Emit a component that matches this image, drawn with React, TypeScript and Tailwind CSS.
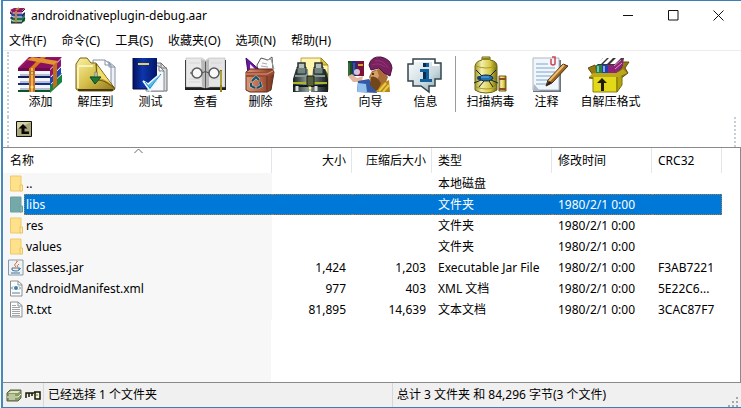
import React from "react";

function AddIcon() {
  return (
    <svg width="45" height="38" viewBox="0 0 45 38">
      <path d="M32 28 44 17V26L32 37Z" fill="#17843f" />
      <path d="M32 21 43 10V18L32 30Z" fill="#1f45b5" />
      <path d="M32 14 43 3V10L32 21Z" fill="#8c1668" />
      <path d="M0 12 11 1H44L32 13Z" fill="#9b1466" />
      <path d="M3 12 13 2H43L32 13Z" fill="#7d0e59" opacity=".6" />
      <path d="M0 12H32V15H0Z" fill="#6d0a4e" />
      <path d="M2 15H32V20H2ZM2 22H32V27H2ZM2 29H32V34H2Z" fill="#f4f5fa" />
      <path d="M2 18H32V20H2ZM2 25H32V27H2ZM2 32H32V34H2Z" fill="#b9bfd2" />
      <path d="M0 20H32V22H0Z" fill="#10205c" />
      <path d="M0 27H32V29H0Z" fill="#14308a" />
      <path d="M0 34H32V36H0Z" fill="#0b552c" />
      <path d="M33 21 43 11M33 28 44 18" stroke="#dbe3f5" strokeWidth="1" />
      <path d="M12 12 23 1H28L17 12Z" fill="#d97a1c" />
      <path d="M9 4 36 9 40 5 14 1Z" fill="#e39532" />
      <path d="M11 12H17V36H11Z" fill="#c9731f" />
      <path d="M13 12H15V36H13Z" fill="#f0b257" />
      <path d="M35 10 39 6V29L35 33Z" fill="#c36c1b" />
      <circle cx="14" cy="17" r="1.5" fill="#ffe27a" stroke="#6b3c08" strokeWidth=".5" />
      <circle cx="14" cy="31" r="1.5" fill="#ffe27a" />
    </svg>
  );
}

function ExtractIcon() {
  return (
    <svg width="45" height="38" viewBox="0 0 45 38">
      <defs>
        <linearGradient id="folder" x1="0" y1="0" x2="1" y2="1">
          <stop stopColor="#fbf3a5" /><stop offset=".5" stopColor="#d6bf4a" /><stop offset="1" stopColor="#8e741b" />
        </linearGradient>
      </defs>
      <path d="M24 6H36L42 11V32H24Z" fill="#eef1f6" stroke="#8692a5" />
      <path d="M20 4H32L38 9V32H20Z" fill="#fff" stroke="#8692a5" />
      <path d="M32 4V9H38M36 6V11H42" fill="none" stroke="#8692a5" />
      <path d="M3 8 7 2H14L18 7H23L42 33 39 35H6L3 33Z" fill="url(#folder)" stroke="#786015" />
      <path d="M5 10H20M5 11V32" stroke="#fffad0" strokeWidth="1.5" />
      <path d="M23 8 42 33C36 27 30 24 24 24Z" fill="#c39c2a" stroke="#67510d" />
      <path d="M24 9 39 29C32 23 29 22 25 23Z" fill="#f1dc6c" />
      <path d="M5 34H40" stroke="#49380b" strokeWidth="2" />
      <path d="M22 16V21H17L22 27 27 21H24V16Z" fill="#e5efe1" stroke="#738475" />
      <path d="M17 21H28L22 28Z" fill="#1e7837" stroke="#0e4c20" />
    </svg>
  );
}

function TestIcon() {
  return (
    <svg width="45" height="38" viewBox="0 0 45 38">
      <defs><linearGradient id="cover"><stop stopColor="#05105f" /><stop offset=".4" stopColor="#0d36ad" /><stop offset="1" stopColor="#041667" /></linearGradient></defs>
      <path d="M25 7H33L39 13V35H20Z" fill="#d9dde1" stroke="#6a6e72" />
      <path d="M23 10H31L36 15V35H18Z" fill="#f8f9fa" stroke="#858a90" />
      <path d="M31 10V15H36M33 7V12H39" fill="none" stroke="#777" />
      <path d="M5 2H29V25L23 33H5Z" fill="url(#cover)" />
      <path d="M5 2V33H20" fill="none" stroke="#030b42" />
      <path d="M10 8H21" stroke="#e5d254" strokeWidth="2" />
      <path d="M15 25 20 28 34 16 22 35Z" fill="#5dbbe9" stroke="#eafaff" strokeWidth="1.5" />
      <path d="M17 26 22 32 33 18" fill="none" stroke="#248bc8" />
    </svg>
  );
}

function ViewIcon() {
  return (
    <svg width="45" height="38" viewBox="0 0 45 38">
      <path d="M2 4H21L23 6 25 4H43V34H2Z" fill="#1e1e1e" />
      <path d="M3 2H19L22 4V32L18 31H3Z" fill="#e9e9e9" stroke="#aaa" strokeWidth=".5" />
      <path d="M42 2H26L23 4V32L27 31H42Z" fill="#e4e4e4" stroke="#aaa" strokeWidth=".5" />
      <path d="M18 3 22 5V32L19 30ZM26 3 23 5V32L26 30Z" fill="#b9b9b9" />
      <path d="M6 7H17M6 23H17M6 26H17M28 7H39M28 23H38" stroke="#d5d5d5" />
      <circle cx="14" cy="17" r="5" fill="#f8f8f8" stroke="#595959" strokeWidth="1.5" />
      <circle cx="31" cy="17" r="5" fill="#f8f8f8" stroke="#595959" strokeWidth="1.5" />
      <path d="M9 17H7M19 17Q22 14 26 17M36 16 39 15" fill="none" stroke="#4d4d4d" />
      <path d="M38 14V30" stroke="#766c13" strokeWidth="2" />
      <path d="M38 15V29" stroke="#e4d75e" />
      <path d="M37 29H39V36H37Z" fill="#97861b" />
    </svg>
  );
}

function DeleteIcon() {
  return (
    <svg width="45" height="38" viewBox="0 0 45 38">
      <defs><linearGradient id="bin"><stop stopColor="#dc9879" /><stop offset=".5" stopColor="#b86447" /><stop offset="1" stopColor="#72351f" /></linearGradient></defs>
      <path d="M19 9 23 2 30 4 34 1 35 14 20 17Z" fill="#fafafa" stroke="#555" />
      <path d="M28 4 33 3 36 13" fill="none" stroke="#999" />
      <path d="M24 7 29 8M23 10 30 11" stroke="#aaa" />
      <path d="M8 2 25 17H10Z" fill="#7015a0" stroke="#370b5f" />
      <path d="M12 8 18 14H12Z" fill="#f4e5fa" />
      <path d="M8 16 12 13H34L36 16 33 34 29 36H12L8 34Z" fill="url(#bin)" stroke="#5c2b1b" />
      <path d="M8 16H29L35 13 36 18 30 21H8Z" fill="#9c4c32" />
      <path d="M8 18H29L35 15" fill="none" stroke="#df9b7e" />
      <path d="M14 25 18 21 21 24M22 26 23 30 19 32M17 32 13 30 13 27" fill="none" stroke="#b6dbe0" strokeWidth="3" />
      <path d="M14 25 18 21 21 24M22 26 23 30 19 32M17 32 13 30 13 27" fill="none" stroke="#175066" strokeWidth="2" />
      <path d="M29 20V35" stroke="#6a2d1a" />
    </svg>
  );
}

function FindIcon() {
  return (
    <svg width="45" height="38" viewBox="0 0 45 38">
      <defs><linearGradient id="barrel"><stop stopColor="#182022" /><stop offset=".4" stopColor="#8b9b98" /><stop offset="1" stopColor="#11191b" /></linearGradient></defs>
      <path d="M8 2H28L35 9V34H8Z" fill="#fff5ac" stroke="#b8a44a" />
      <path d="M28 2V9H35Z" fill="#e2c33c" stroke="#a1831f" />
      <path d="M4 12H7L4 18ZM32 13 35 18V26H32Z" fill="#626b32" />
      <path d="M3 13H15L16 36H0V23ZM20 13H32L35 23V36H18Z" fill="url(#barrel)" />
      <path d="M4 11H13V18H4ZM21 11H30V18H21Z" fill="#738480" stroke="#1f2929" />
      <path d="M5 12V7H12V12M22 12V7H29V12" fill="#b5c0ba" stroke="#273130" strokeWidth="1.5" />
      <path d="M2 20H14M20 20H32" stroke="#899a93" strokeWidth="2" />
      <path d="M0 27H15M18 27H34" stroke="#b0b623" strokeWidth="2" />
      <path d="M0 30H15M18 30H34" stroke="#0f1719" strokeWidth="2" />
      <path d="M14 20H21V30H14Z" fill="#57603d" stroke="#191e19" />
      <path d="M4 30V35M23 30V35" stroke="#dbe1e1" strokeWidth="3" />
    </svg>
  );
}

function WizardIcon() {
  return (
    <svg width="45" height="38" viewBox="0 0 45 38">
      <path d="M0 5H5V20H0Z" fill="#174f23" /><path d="M4 5H9V20H4Z" fill="#202b91" /><path d="M9 5H16V20H9Z" fill="#7b1038" />
      <path d="M1 7V19M6 7V19" stroke="#5d8a51" />
      <path d="M10 9H15" stroke="#d1a43b" strokeWidth="2" />
      <path d="M0 20 4 18 9 22 15 20 14 26 5 26Z" fill="#e3b59c" />
      <circle cx="9" cy="16" r="3" fill="#fff" opacity=".75" />
      <path d="M9 36 10 25 21 23 28 32 29 37Z" fill="#3559a5" />
      <path d="M10 27 18 28 19 36H9Z" fill="#91c1ec" />
      <path d="M24 15 34 12 40 21 36 31 29 33 23 26 21 21Z" fill="#a96c38" />
      <path d="M24 17 29 14 31 20 28 25 22 23Z" fill="#d5a067" />
      <path d="M23 21Q27 19 31 24L35 31 28 35 22 29Z" fill="#70471d" />
      <path d="M29 35 33 28 41 24 42 36H27Z" fill="#b88718" />
      <path d="M31 35 38 27M35 36 41 29" stroke="#e8cc48" strokeWidth="2" />
      <path d="M21 9Q23 0 33 1Q43 3 44 12L42 20 36 17 31 12 23 14Z" fill="#79205f" stroke="#4b113e" />
      <path d="M24 9Q31 6 37 11M27 5Q35 3 40 12" fill="none" stroke="#92367b" />
      <circle cx="25" cy="18" r="1" fill="#291708" />
    </svg>
  );
}

function InfoIcon() {
  return (
    <svg width="45" height="38" viewBox="0 0 45 38">
      <defs><linearGradient id="bubble" x1="0" y1="0" x2="1" y2="1"><stop stopColor="#fff" /><stop offset=".6" stopColor="#c9d9df" /><stop offset="1" stopColor="#809ca6" /></linearGradient></defs>
      <path d="M10 3H32V7H38V23H32V30H26V36L18 30H10V25H5V8H10Z" fill="url(#bubble)" stroke="#35464d" strokeWidth="1.5" />
      <path d="M11 5H30V9H36" fill="none" stroke="#fff" strokeWidth="2" />
      <path d="M20 7H26V11H20ZM17 13H26V23H29V26H17V23H20V16H17Z" fill="#155f9c" />
      <path d="M20 7H23V11H20ZM20 16H23V23H20Z" fill="#082d55" />
    </svg>
  );
}

function ScanIcon() {
  return (
    <svg width="45" height="38" viewBox="0 0 45 38">
      <defs><linearGradient id="jar"><stop stopColor="#a39a20" /><stop offset=".3" stopColor="#f4eeae" /><stop offset=".7" stopColor="#d6c842" /><stop offset="1" stopColor="#6e6812" /></linearGradient></defs>
      <path d="M14 1H22V4Q29 5 29 10V34Q25 37 18 37T7 34V10Q8 5 14 4Z" fill="url(#jar)" stroke="#6c6616" />
      <path d="M14 2H22V4H14Z" fill="#8b831b" />
      <path d="M8 10Q18 14 28 10M8 31Q18 35 28 31" fill="none" stroke="#a89b25" />
      <path d="M14 20 8 14M13 24 6 27M22 20 28 14M23 24 30 27M16 25 11 31M21 25 25 31" stroke="#14232d" />
      <ellipse cx="18" cy="22" rx="7" ry="3" fill="#216caa" stroke="#082644" />
      <path d="M13 21H21" stroke="#62b4df" />
      <circle cx="11" cy="22" r="2" fill="#113b70" />
      <path d="M31 20H38V35H31Z" fill="url(#jar)" stroke="#765a13" />
      <path d="M31 23H38M31 33H38" stroke="#8d4d20" strokeWidth="2" />
    </svg>
  );
}

function CommentIcon() {
  return (
    <svg width="45" height="38" viewBox="0 0 45 38">
      <path d="M11 4H37V36H9Z" fill="#697580" />
      <path d="M9 2H35V34H9Z" fill="#f0f6fb" stroke="#b0b8c0" />
      <path d="M12 8H24M12 12H31M12 16H31M12 20H30M12 24H25M12 28H23" stroke="#7ca5cc" />
      <path d="M10 28 16 35H9Z" fill="#adb9c4" />
      <path d="M27 3V8Q29 10 31 8V1H28" fill="none" stroke="#c94750" strokeWidth="1.5" />
      <path d="M22 30 24 24 39 8 44 10 28 27Z" fill="#9e6624" stroke="#4c2e10" />
      <path d="M25 25 40 9" stroke="#efbd6d" strokeWidth="2" />
      <path d="M22 30 25 25 28 27Z" fill="#252525" />
    </svg>
  );
}

function SfxIcon() {
  return (
    <svg width="45" height="38" viewBox="0 0 45 38">
      <path d="M5 19 0 12 7 9 9 17H30L35 6 41 6 37 12 40 17 32 23H11L1 22Z" fill="#957913" stroke="#635008" />
      <path d="M8 10 15 2H36L34 12 28 17H8Z" fill="#373737" />
      <path d="M8 9H14V17H8Z" fill="#208144" />
      <path d="M14 9H20V17H14Z" fill="#263daf" />
      <path d="M20 9H27L35 2V10L28 17H20Z" fill="#8b2474" />
      <path d="M9 8 15 2H19L13 8ZM15 8 21 2H25L19 8ZM22 8 28 2H33L27 8Z" fill="#fff" />
      <path d="M10 10V16M16 10V16" stroke="#9cd3df" strokeWidth="1.5" />
      <path d="M26 10 33 4M27 13 34 7" stroke="#e48bcb" />
      <path d="M5 18H29V36H5Z" fill="#e2da18" stroke="#8b8111" />
      <path d="M29 18 34 13V29L29 36Z" fill="#b2a411" stroke="#777006" />
      <path d="M1 21 5 17H29L35 13 39 17 30 21Z" fill="#bda81c" />
      <path d="M13 35V27H9L14 22 19 27H16V35Z" fill="#211b07" />
    </svg>
  );
}

type Tool = [string, () => React.JSX.Element, string];

const tools: Tool[] = [
  ["添加", AddIcon, "w-[55px]"],
  ["解压到", ExtractIcon, "w-[55px]"],
  ["测试", TestIcon, "w-[55px]"],
  ["查看", ViewIcon, "w-[55px]"],
  ["删除", DeleteIcon, "w-[55px]"],
  ["查找", FindIcon, "w-[55px]"],
  ["向导", WizardIcon, "w-[55px]"],
  ["信息", InfoIcon, "w-[55px]"],
];
const extraTools: Tool[] = [
  ["扫描病毒", ScanIcon, "w-[59px]"],
  ["注释", CommentIcon, "w-[53px]"],
  ["自解压格式", SfxIcon, "w-[75px]"],
];

function ToolButton({ item }: { item: Tool }) {
  const [label, Icon, width] = item;
  return (
    <button type="button" className={`flex shrink-0 flex-col items-center whitespace-nowrap ${width}`}>
      <Icon />
      <span className="text-[12px] leading-4">{label}</span>
    </button>
  );
}

function AppLogo() {
  return (
    <svg width="18" height="17" viewBox="0 0 18 17" className="shrink-0">
      <path d="M1 3 5 1H16L13 4V7H1Z" fill="#93195f" />
      <path d="M2 7H13L16 5V9L13 11H2Z" fill="#314d9d" />
      <path d="M2 11H13L16 9V14L13 16H2Z" fill="#15733d" />
      <path d="M1 3 3 6H13M1 8 4 10H13M1 12 4 14H13" stroke="#e9ecf0" fill="none" />
      <path d="M13 5 16 2M13 9 16 6M13 15 16 11" stroke="#222" />
      <path d="M7 4V16M7 3 10 1" stroke="#c18343" strokeWidth="2" />
      <path d="M1 6H4M1 11H4M2 16H13" stroke="#321933" />
    </svg>
  );
}

type Kind = "folder" | "selected" | "jar" | "xml" | "txt";

function FileIcon({ kind }: { kind: Kind }) {
  if (kind === "folder" || kind === "selected") {
    const on = kind === "selected";
    return (
      <svg width="16" height="17" viewBox="0 0 16 17" className="shrink-0">
        <path d="M2.500 1H13V16H2.500Z" fill={on ? "#75a9a9" : "#ffe18b"} stroke={on ? "#6aa0a3" : "#edca6b"} />
        <path d="M12 10H14.500V16H12Z" fill={on ? "#8cb6ad" : "#ffe9a8"} stroke={on ? "#6a9ea1" : "#e9c45f"} />
      </svg>
    );
  }
  if (kind === "jar") {
    return (
      <svg width="16" height="17" viewBox="0 0 16 17" className="shrink-0">
        <path d="M.5 1H15V16H.5Z" fill="#edf2f5" stroke="#879aab" />
        <path d="M8 8Q5 6 8 4T8 2M10 8Q8 7 11 5" stroke="#e36f2a" fill="none" />
        <path d="M4 9H11V11Q10 12 8 12T4 11ZM11 9Q14 9 11 11M3 14H12" stroke="#467092" fill="none" />
      </svg>
    );
  }
  return (
    <svg width="16" height="17" viewBox="0 0 16 17" className="shrink-0">
      <path d="M2.500 1H10L14 4.500V16H2.500Z" fill="#fcfcfc" stroke="#8b8f92" />
      <path d="M10 1V5H14" fill="none" stroke="#8b8f92" />
      {kind === "xml" ? (
        <g><circle cx="8" cy="8" r="2" fill="#3c81ae" /><path d="M5 6.500 3.500 8 5 9.500M11 6.500 12.500 8 11 9.500M4 13H12" stroke="#5e7c95" fill="none" /></g>
      ) : (
        <path d="M4 4.500H8M4 6.500H12M4 8.500H12M4 10.500H12M4 12.500H12M4 14.500H12" stroke="#a0a4a6" />
      )}
    </svg>
  );
}

const date = "1980/2/1 0:00";
const files: { kind: Kind; name: string; size?: string; packed?: string; type: string; date?: string; crc?: string }[] = [
  { kind: "folder", name: "..", type: "本地磁盘" },
  { kind: "selected", name: "libs", type: "文件夹", date },
  { kind: "folder", name: "res", type: "文件夹", date },
  { kind: "folder", name: "values", type: "文件夹", date },
  { kind: "jar", name: "classes.jar", size: "1,424", packed: "1,203", type: "Executable Jar File", date, crc: "F3AB7221" },
  { kind: "xml", name: "AndroidManifest.xml", size: "977", packed: "403", type: "XML 文档", date, crc: "5E22C6..." },
  { kind: "txt", name: "R.txt", size: "81,895", packed: "14,639", type: "文本文档", date, crc: "3CAC87F7" },
];

function FileTable() {
  const head = "border-r border-[#e2e6ea] p-0 pl-[6px] pr-[5px] font-normal whitespace-nowrap";
  return (
    <table className="w-full table-fixed border-separate border-spacing-0 text-[12px] leading-4">
      <colgroup>
        <col className="w-[269px]" /><col className="w-20" /><col className="w-20" /><col className="w-[120px]" /><col className="w-[100px]" /><col className="w-[70px]" /><col />
      </colgroup>
      <thead>
        <tr className="h-[25px] text-left">
          <th className="relative border-r border-[#e2e6ea] p-0 pl-[7px] font-normal">
            名称
            <svg className="absolute left-[131px] top-0" width="9" height="6" viewBox="0 0 9 6"><path d="M.5 5 4.500 1 8.500 5" fill="none" stroke="#666" /></svg>
          </th>
          <th className={`${head} text-right`}>大小</th>
          <th className={`${head} text-right`}>压缩后大小</th>
          <th className={head}>类型</th>
          <th className={head}>修改时间</th>
          <th className={head}>CRC32</th>
          <th className="p-0" />
        </tr>
      </thead>
      <tbody>
        {files.map((f) => {
          const on = f.kind === "selected";
          const cell = `p-0 px-[6px] whitespace-nowrap ${on ? "border-y border-dotted border-[#a88050] bg-[#0078d7] text-white" : ""}`;
          return (
            <tr key={f.name} className="h-[21px]">
              <td className="bg-[#f7f7f7] p-0">
                <div className="flex h-[21px] items-center pl-[5px]">
                  <FileIcon kind={f.kind} />
                  <span className={`flex h-[21px] min-w-0 flex-1 items-center ${on ? "border-y border-l border-dotted border-[#a88050] bg-[#0078d7] pl-px text-white" : "pl-[2px]"}`}>{f.name}</span>
                </div>
              </td>
              <td className={`${cell} text-right`}>{f.size}</td>
              <td className={`${cell} text-right`}>{f.packed}</td>
              <td className={cell}>{f.type}</td>
              <td className={cell}>{f.date}</td>
              <td className={`${cell} ${on ? "border-r" : ""}`}>{f.crc}</td>
              <td className="p-0" />
            </tr>
          );
        })}
      </tbody>
    </table>
  );
}

export default function App() {
  return (
    <div className="min-h-screen bg-white pl-px font-['Noto_Sans','Noto_Sans_CJK_SC',sans-serif] text-black">
      <main className="flex min-h-screen flex-col border-y border-l-2 border-[#3a7fb5] border-l-[#4789b8]">
        <header className="flex h-[29px] items-center pl-[6px]">
          <AppLogo />
          <h1 className="ml-1 flex-1 text-[12px] font-normal">androidnativeplugin-debug.aar</h1>
          <button type="button" aria-label="最小化" className="flex h-full w-[45px] items-center justify-center"><svg width="11" height="11"><path d="M0 5.500H10" stroke="#111" /></svg></button>
          <button type="button" aria-label="最大化" className="flex h-full w-[45px] items-center justify-center"><svg width="11" height="11"><path d="M.5.5H10V10H.5Z" fill="none" stroke="#111" /></svg></button>
          <button type="button" aria-label="关闭" className="flex h-full w-[45px] items-center justify-center"><svg width="11" height="11"><path d="M.5.5 10.500 10.500M10.500.5.5 10.500" stroke="#111" /></svg></button>
        </header>
        <nav className="flex h-[21px] items-end gap-[15px] border-b border-[#ececec] pb-px pl-[6px] text-[12px]">
          {["文件(F)", "命令(C)", "工具(S)", "收藏夹(O)", "选项(N)", "帮助(H)"].map((m) => (
            <button type="button" key={m} className="whitespace-nowrap leading-4">{m}</button>
          ))}
        </nav>
        <div className="flex flex-col pl-1 pt-px">
          <div className="flex h-[65px] border-l-2 border-dotted border-[#c8d0d6] pl-1 pt-1">
            {tools.map((t) => <ToolButton key={t[0]} item={t} />)}
            <div className="mr-[5px] ml-[2px] h-14 w-px shrink-0 bg-[#9b9b9b]" />
            {extraTools.map((t) => <ToolButton key={t[0]} item={t} />)}
          </div>
          <div className="mr-[5px] flex h-[30px] items-start border-x-2 border-dotted border-[#c8d0d6] pt-1 pl-[7px]">
            <button type="button" aria-label="向上一级">
              <svg width="16" height="16" viewBox="0 0 16 16">
                <path d="M.5.5H15.500V15.500H.5Z" fill="#aaa77c" stroke="#111" />
                <path d="M1 1H15L1 8Z" fill="#d4d1a4" />
                <path d="M7 3 2.500 7.500H5.500V13H13V10.500H8.500V7.500H11.500Z" fill="#080808" />
              </svg>
            </button>
          </div>
        </div>
        <section className="flex-1 border-y border-r border-[#8a8a8a] bg-[linear-gradient(to_right,#f7f7f7_268px,white_268px)]">
          <div className="bg-[linear-gradient(white,white)] bg-[length:100%_25px] bg-no-repeat"><FileTable /></div>
        </section>
        <footer className="flex h-6 shrink-0 items-center bg-[#f0f0f0] text-[12px] leading-4">
          <div className="flex h-full w-[41px] items-center gap-[3px] border-r border-[#d7d7d7] pl-[3px]">
            <svg width="16" height="13" viewBox="0 0 16 13"><path d="M1 4 4 1H15V9L12 12H1Z" fill="#8b9b67" stroke="#566340" /><path d="M2 4 5 2H14L12 4Z" fill="#dce5bd" /><path d="M1 8H12L15 5M3 6H9M3 10H9" stroke="#edf3d7" fill="none" /></svg>
            <svg width="16" height="10" viewBox="0 0 16 10"><path d="M1 8V3H9M4 3V7M7 3V6M9 2H15V9H10V2" fill="none" stroke="#171700" strokeWidth="1.5" /><path d="M11 4H13V6H11Z" fill="#bdb762" /></svg>
          </div>
          <div className="flex h-full flex-1 items-center border-r border-[#d7d7d7] pl-1">已经选择 1 个文件夹</div>
          <div className="flex h-full flex-1 items-center justify-between pl-1">
            <span className="whitespace-nowrap">总计 3 文件夹 和 84,296 字节(3 个文件)</span>
            <svg width="12" height="12" className="mr-px shrink-0 self-end"><path d="M9 2V4M9 6V8M9 10V12M5 6V8M5 10V12M1 10V12" stroke="#a8a8a8" strokeWidth="2" /></svg>
          </div>
        </footer>
      </main>
    </div>
  );
}
